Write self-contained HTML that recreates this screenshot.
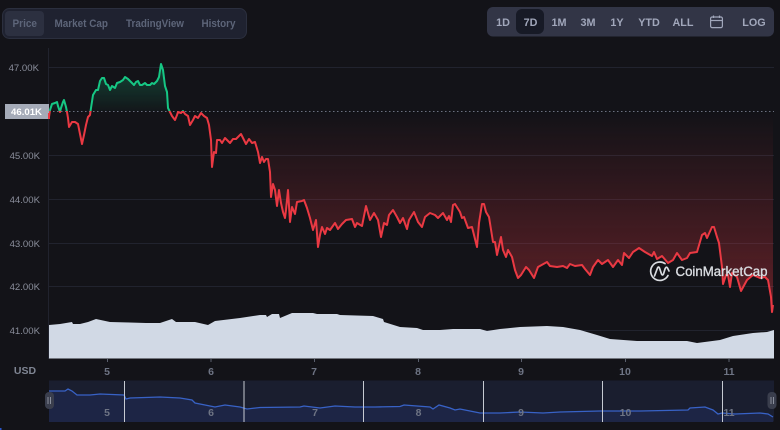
<!DOCTYPE html>
<html><head><meta charset="utf-8"><style>
html,body{margin:0;padding:0;background:#131318}
body{width:780px;height:430px;overflow:hidden;position:relative;font-family:"Liberation Sans",sans-serif}
svg{position:absolute;left:0;top:0;filter:blur(.35px)}
text{font-family:"Liberation Sans",sans-serif}
</style></head><body>
<svg width="780" height="430" viewBox="0 0 780 430" xmlns="http://www.w3.org/2000/svg">
<defs>
<linearGradient id="rg" gradientUnits="userSpaceOnUse" x1="0" y1="111" x2="0" y2="290"><stop offset="0" stop-color="#ea3943" stop-opacity="0"/><stop offset="1" stop-color="#ea3943" stop-opacity=".32"/></linearGradient>
<linearGradient id="gg" gradientUnits="userSpaceOnUse" x1="0" y1="64" x2="0" y2="111"><stop offset="0" stop-color="#16c784" stop-opacity=".3"/><stop offset="1" stop-color="#16c784" stop-opacity=".02"/></linearGradient>
<clipPath id="above"><rect x="49" y="40" width="726" height="71"/></clipPath>
<clipPath id="below"><rect x="49" y="111" width="726" height="220"/></clipPath>
<clipPath id="nv"><rect x="49" y="380" width="725" height="42"/></clipPath>
<polyline id="p" points="49,117 50,110 52,104 55,103 57,102 58,106 60,112 61,108 63,102 64,100 66,107 67,112 68,118 69,127 72,122 75,122 78,124 80,134 82,144 84,135 86,125 88,117 90,115 91,108 93,95 96,90 98,90 100,81 102,78 104,78 106,84 108,85 110,90 112,86 115,88 117,83 120,82 123,80 125,77 128,79 131,82 134,85 136,82 138,81 140,85 142,85 145,83 147,85 150,85 152,83 154,84 157,81 159,77 161,64 163,70 164,78 165,86 167,92 168,108 170,112 172,116 175,120 177,115 178,112 181,113 183,111 185,114 188,116 190,125 193,120 195,116 198,118 201,113 204,116 207,118 209,125 211,140 212,167 214,152 216,153 217,140 220,140 222,143 225,138 228,141 230,143 233,139 236,139 239,136 241,134 244,140 246,144 249,139 252,143 255,142 258,152 260,163 262,157 264,162 266,159 268,159 270,172 271,197 273,184 275,190 277,206 279,190 281,203 283,212 285,218 286,210 288,190 290,222 292,207 295,214 297,202 302,201 304,200 307,208 310,218 313,230 316,220 318,247 320,235 322,227 325,234 327,228 330,230 335,223 338,229 342,224 346,220 352,219 355,227 357,223 362,226 366,206 370,220 374,213 378,220 381,237 384,223 387,225 389,215 393,210 397,217 400,223 403,218 407,229 409,220 414,212 418,222 422,227 425,217 430,213 435,215 438,218 443,213 447,220 449,216 451,222 453,205 455,204 460,212 462,218 464,217 468,228 472,227 477,247 479,223 482,204 484,204 486,212 489,217 493,242 495,242 497,255 501,237 503,250 506,257 508,250 512,257 515,270 518,278 521,275 526,267 529,270 534,278 538,267 547,262 550,266 557,267 563,266 567,268 570,264 575,266 582,265 585,269 590,275 593,267 598,260 602,264 608,260 613,267 618,260 622,265 624,253 629,258 633,252 639,248 645,252 652,256 654,252 657,259 662,256 668,263 673,260 677,253 682,260 687,258 690,253 697,252 702,235 705,233 707,238 712,227 714,227 717,237 719,243 722,267 723,284 726,275 728,275 730,287 732,273 737,277 741,291 747,280 753,275 760,278 765,277 768,280 771,297 772,312 773,305"/>
</defs>

<!-- grid -->
<g stroke="#21232e" stroke-width="1">
<line x1="49" y1="67.5" x2="774" y2="67.5"/><line x1="49" y1="155.5" x2="774" y2="155.5"/><line x1="49" y1="199.5" x2="774" y2="199.5"/><line x1="49" y1="243.5" x2="774" y2="243.5"/><line x1="49" y1="286.5" x2="774" y2="286.5"/><line x1="49" y1="330.5" x2="774" y2="330.5"/>
<line x1="48.5" y1="48" x2="48.5" y2="359"/>
</g>

<!-- fills -->
<polygon clip-path="url(#above)" fill="url(#gg)" points="49,117 50,110 52,104 55,103 57,102 58,106 60,112 61,108 63,102 64,100 66,107 67,112 88,112 90,115 91,108 93,95 96,90 98,90 100,81 102,78 104,78 106,84 108,85 110,90 112,86 115,88 117,83 120,82 123,80 125,77 128,79 131,82 134,85 136,82 138,81 140,85 142,85 145,83 147,85 150,85 152,83 154,84 157,81 159,77 161,64 163,70 164,78 165,86 167,92 168,108 170,112"/>
<polygon clip-path="url(#below)" fill="url(#rg)" points="170,111 172,116 175,120 177,115 178,112 181,113 183,111 185,114 188,116 190,125 193,120 195,116 198,118 201,113 204,116 207,118 209,125 211,140 212,167 214,152 216,153 217,140 220,140 222,143 225,138 228,141 230,143 233,139 236,139 239,136 241,134 244,140 246,144 249,139 252,143 255,142 258,152 260,163 262,157 264,162 266,159 268,159 270,172 271,197 273,184 275,190 277,206 279,190 281,203 283,212 285,218 286,210 288,190 290,222 292,207 295,214 297,202 302,201 304,200 307,208 310,218 313,230 316,220 318,247 320,235 322,227 325,234 327,228 330,230 335,223 338,229 342,224 346,220 352,219 355,227 357,223 362,226 366,206 370,220 374,213 378,220 381,237 384,223 387,225 389,215 393,210 397,217 400,223 403,218 407,229 409,220 414,212 418,222 422,227 425,217 430,213 435,215 438,218 443,213 447,220 449,216 451,222 453,205 455,204 460,212 462,218 464,217 468,228 472,227 477,247 479,223 482,204 484,204 486,212 489,217 493,242 495,242 497,255 501,237 503,250 506,257 508,250 512,257 515,270 518,278 521,275 526,267 529,270 534,278 538,267 547,262 550,266 557,267 563,266 567,268 570,264 575,266 582,265 585,269 590,275 593,267 598,260 602,264 608,260 613,267 618,260 622,265 624,253 629,258 633,252 639,248 645,252 652,256 654,252 657,259 662,256 668,263 673,260 677,253 682,260 687,258 690,253 697,252 702,235 705,233 707,238 712,227 714,227 717,237 719,243 722,267 723,284 726,275 728,275 730,287 732,273 737,277 741,291 747,280 753,275 760,278 765,277 768,280 771,297 772,312 773,305 773,111"/>
<polygon clip-path="url(#below)" fill="url(#rg)" points="68,111 68,118 69,127 72,122 75,122 78,124 80,134 82,144 84,135 86,125 88,117 90,111"/>

<!-- baseline -->
<line x1="49" y1="111.5" x2="774" y2="111.5" stroke="#6b7080" stroke-width="1" stroke-dasharray="1.5 2.5"/>

<!-- line -->
<use href="#p" clip-path="url(#above)" fill="none" stroke="#16c784" stroke-width="2" stroke-linejoin="round"/>
<use href="#p" clip-path="url(#below)" fill="none" stroke="#ea3943" stroke-width="2" stroke-linejoin="round"/>

<!-- volume -->
<polygon fill="#d1d9e5" points="49,358.5 49,325 60,324 72,322 73,324 80,324 88,322 96,319 110,322 146,323 160,323 172,319 176,322 195,322 208,325 215,321 240,318 260,315 266,315 267,317 272,314 279,314 280,318 292,313 313,313 317,314 337,314 340,315 373,316 383,319 384,322 400,327 417,328 423,330 440,330 453,329 480,329 487,331 500,329 520,327 547,326 563,327 580,330 597,335 610,339 637,341 653,341 687,341 697,343 720,340 733,336 753,333 767,332 774,330 774,358.5"/>

<!-- logo -->
<g fill="none" stroke="#d9dce1" stroke-width="1.7" stroke-linecap="round" stroke-linejoin="round">
<path d="M668,275.5 A9.2,9.2 0 1 1 665,263.6"/>
<path d="M654.5,276 L657.5,268 Q658.5,266 659.5,268 L661.5,274 Q662.5,276 663.5,274 L665,269 Q666.5,265.5 668,269 L669,271"/>
</g>
<text x="675.5" y="276" font-size="13.4" font-weight="400" fill="#d9dce1" stroke="#d9dce1" stroke-width=".35" textLength="92" lengthAdjust="spacingAndGlyphs">CoinMarketCap</text>

<!-- y labels -->
<g font-size="9.6" fill="#8a8e9b" font-weight="400" text-anchor="end">
<text x="39" y="71">47.00K</text><text x="40" y="159">45.00K</text><text x="40" y="203">44.00K</text><text x="40" y="247">43.00K</text><text x="40" y="290">42.00K</text><text x="40" y="334">41.00K</text>
</g>
<rect x="5" y="104" width="44" height="15" fill="#a5abb8"/>
<rect x="48" y="113" width="2" height="6" fill="#ea3943"/>
<text x="26.5" y="115" font-size="9.6" font-weight="700" fill="#fff" text-anchor="middle">46.01K</text>

<!-- x axis -->
<g stroke="#5a5f6d" stroke-width="1"><line x1="107.5" y1="359" x2="107.5" y2="362"/><line x1="211" y1="359" x2="211" y2="362"/><line x1="314.5" y1="359" x2="314.5" y2="362"/><line x1="418.5" y1="359" x2="418.5" y2="362"/><line x1="521.5" y1="359" x2="521.5" y2="362"/><line x1="625.5" y1="359" x2="625.5" y2="362"/><line x1="729" y1="359" x2="729" y2="362"/></g>
<g font-size="10.5" font-weight="700" fill="#6e7484" text-anchor="middle">
<text x="107" y="375">5</text><text x="211" y="375">6</text><text x="314" y="375">7</text><text x="418" y="375">8</text><text x="521" y="375">9</text><text x="625" y="375">10</text><text x="729" y="375">11</text>
</g>
<text x="25" y="374" font-size="10.5" font-weight="700" fill="#7f8593" text-anchor="middle">USD</text>

<!-- navigator -->
<rect x="49" y="380.5" width="725" height="41" fill="#1a1e2f"/>
<polygon clip-path="url(#nv)" fill="#1d2545" points="49,422 49,391 65,391 68,389 72,391 77,395 90,395 100,394 124,395 126,399 130,398 160,397 180,398 192,400 195,403 205,405 215,407 225,405 240,407 247,409 260,407.5 300,407 304,406 320,408 335,406 355,407 375,407 400,406.5 404,405 430,407 433,409 439,405 450,408 455,410 460,409 470,411 480,413 500,413 520,412 543,413 560,412 600,411 640,411 688,410 690,408 705,407 713,410 718,414 722,413 735,414 760,413 768,414 773,417 773,422"/>
<polyline clip-path="url(#nv)" fill="none" stroke="#3862c6" stroke-width="1.3" points="49,391 65,391 68,389 72,391 77,395 90,395 100,394 124,395 126,399 130,398 160,397 180,398 192,400 195,403 205,405 215,407 225,405 240,407 247,409 260,407.5 300,407 304,406 320,408 335,406 355,407 375,407 400,406.5 404,405 430,407 433,409 439,405 450,408 455,410 460,409 470,411 480,413 500,413 520,412 543,413 560,412 600,411 640,411 688,410 690,408 705,407 713,410 718,414 722,413 735,414 760,413 768,414 773,417"/>
<g stroke="#c6cad2" stroke-width="1"><line x1="124.5" y1="381" x2="124.5" y2="422"/><line x1="244" y1="381" x2="244" y2="422"/><line x1="363.5" y1="381" x2="363.5" y2="422"/><line x1="483.5" y1="381" x2="483.5" y2="422"/><line x1="602.5" y1="381" x2="602.5" y2="422"/><line x1="722.5" y1="381" x2="722.5" y2="422"/></g>
<g font-size="10.5" font-weight="700" fill="#6e7484" text-anchor="middle">
<text x="107" y="416">5</text><text x="211" y="416">6</text><text x="315" y="416">7</text><text x="418.5" y="416">8</text><text x="521" y="416">9</text><text x="625.5" y="416">10</text><text x="729" y="416">11</text>
</g>
<rect x="45" y="392" width="9" height="17" rx="4" fill="#3a3e4d"/>
<g stroke="#8a8f9c" stroke-width="1"><line x1="48" y1="397" x2="48" y2="404"/><line x1="50.5" y1="397" x2="50.5" y2="404"/></g>
<rect x="767.5" y="392" width="9" height="17" rx="4" fill="#3a3e4d"/>
<g stroke="#8a8f9c" stroke-width="1"><line x1="771" y1="397" x2="771" y2="404"/><line x1="773.5" y1="397" x2="773.5" y2="404"/></g>
<rect x="0" y="428" width="1.5" height="2" fill="#2a55c8"/>

<!-- tabs -->
<rect x="2.5" y="8.5" width="244" height="30" rx="7" fill="#1f2230" stroke="#2b2f3e"/>
<rect x="5" y="11" width="39" height="25" rx="4" fill="#2c3040"/>
<g font-size="10.6" font-weight="700" fill="#5d6579">
<text x="12.5" y="27" textLength="24.5" lengthAdjust="spacingAndGlyphs">Price</text>
<text x="54.5" y="27" textLength="53.5" lengthAdjust="spacingAndGlyphs">Market Cap</text>
<text x="126" y="27" textLength="58" lengthAdjust="spacingAndGlyphs">TradingView</text>
<text x="201.5" y="27" textLength="34" lengthAdjust="spacingAndGlyphs">History</text>
</g>

<!-- range -->
<rect x="487" y="7" width="287" height="29.5" rx="6" fill="#323546"/>
<rect x="516" y="9" width="28" height="25" rx="6" fill="#171a26"/>
<g font-size="10.8" font-weight="700" fill="#a1a7bb" text-anchor="middle">
<text x="503" y="26">1D</text><text x="530.5" y="26">7D</text><text x="559" y="26">1M</text><text x="588" y="26">3M</text><text x="617" y="26">1Y</text><text x="649" y="26">YTD</text><text x="683" y="26">ALL</text><text x="754" y="26">LOG</text>
</g>
<g fill="none" stroke="#a1a7bb" stroke-width="1.2">
<rect x="710.6" y="17" width="11.8" height="10.6" rx="1.5"/>
<line x1="710.6" y1="20.5" x2="722.4" y2="20.5"/>
<line x1="713.5" y1="15.5" x2="713.5" y2="18"/>
<line x1="719.5" y1="15.5" x2="719.5" y2="18"/>
</g>
</svg>
</body></html>
